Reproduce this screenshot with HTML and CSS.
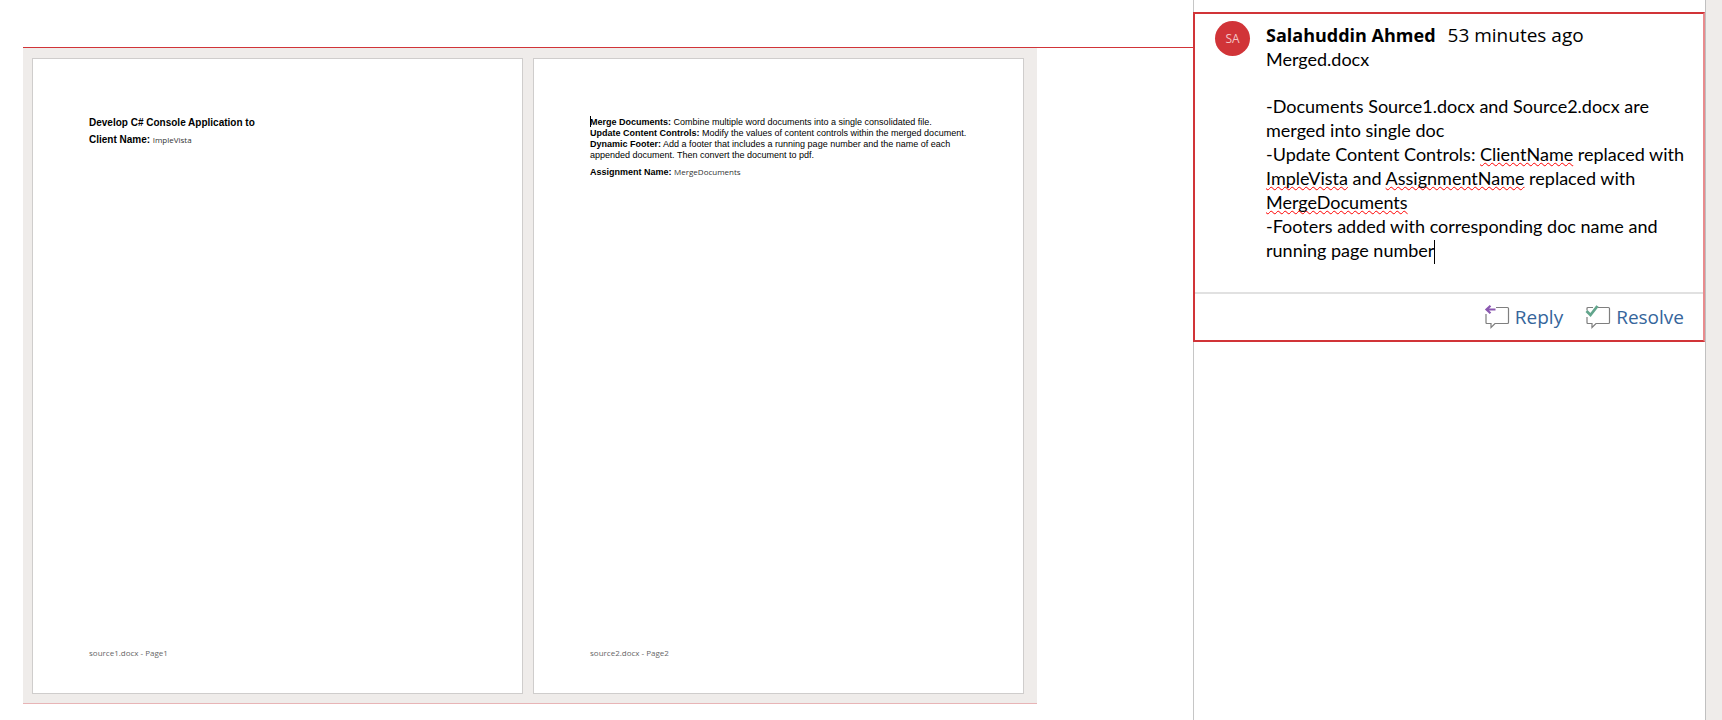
FILE: index.html
```html
<!DOCTYPE html>
<html lang="en">
<head>
<meta charset="utf-8">
<title>Merged.docx</title>
<link rel="stylesheet" href="styles.css">
</head>
<body>
<main class="workspace">
  <div class="anchor">
    <div class="canvas">
      <article class="page">
        <div class="page-body">
          <p class="title"><strong>Develop C# Console Application to</strong></p>
          <p class="field"><strong class="title">Client Name:</strong> <span class="control">ImpleVista</span></p>
        </div>
        <footer class="page-footer">source1.docx - Page1</footer>
      </article>
      <article class="page">
        <div class="page-body">
          <p class="active"><strong>Merge Documents:</strong> Combine multiple word documents into a single consolidated file.</p>
          <p><strong>Update Content Controls:</strong> Modify the values of content controls within the merged document.</p>
          <p><strong>Dynamic Footer:</strong> Add a footer that includes a running page number and the name of each appended document. Then convert the document to pdf.</p>
          <p class="field"><strong>Assignment Name:</strong> <span class="control">MergeDocuments</span></p>
        </div>
        <footer class="page-footer">source2.docx - Page2</footer>
      </article>
    </div>
  </div>
</main>
<aside class="comments">
  <section class="card">
    <div class="comment">
      <span class="avatar">SA</span>
      <div class="content">
        <header class="byline"><strong class="author">Salahuddin Ahmed</strong><span class="time">53 minutes ago</span></header>
        <div class="text">
          <p>Merged.docx</p>
          <p class="gap">-Documents Source1.docx and Source2.docx are merged into single doc</p>
          <p>-Update Content Controls: <span class="typo">ClientName</span> replaced with <span class="typo">ImpleVista</span> and <span class="typo">AssignmentName</span> replaced with <span class="typo">MergeDocuments</span></p>
          <p>-Footers added with corresponding doc name and running page number<span class="caret"></span></p>
        </div>
      </div>
    </div>
    <div class="actions">
      <button class="action" type="button">
        <svg class="icon" width="26" height="24" viewBox="0 0 26 24" fill="none"><path d="M12 2.500H23.500Q24.500 2.500 24.500 3.500V17.500Q24.500 18.500 23.500 18.500H11L7 22.500V18.500H3Q2 18.500 2 17.500V9" stroke="#7f7f7f" stroke-width="1.200"/><path d="M11.500 4.500H3M6.500 .8L2.500 4.500L6.500 8.200" stroke="#8a57b0" stroke-width="2.200"/></svg>
        Reply
      </button>
      <button class="action" type="button">
        <svg class="icon" width="26" height="24" viewBox="0 0 26 24" fill="none"><path d="M13 2.500H23.500Q24.500 2.500 24.500 3.500V17.500Q24.500 18.500 23.500 18.500H11L7 22.500V18.500H3Q2 18.500 2 17.500V12M2 5.500V3.500Q2 2.500 3 2.500H8" stroke="#7f7f7f" stroke-width="1.200"/><path d="M1.500 6L5.500 10L12.500 1" stroke="#62a58c" stroke-width="2.800"/></svg>
        Resolve
      </button>
    </div>
  </section>
</aside>
</body>
</html>
```
FILE: styles.css
```css
* { box-sizing: border-box; }

body {
  margin: 0;
  min-height: 100vh;
  display: flex;
  background: #fff;
  color: #000;
}

p { margin: 0; }

.workspace {
  flex: 1;
  display: flex;
  padding: 47px 0 16px 23px;
}

.anchor {
  flex: 1;
  display: flex;
  padding-right: 156px;
  border-top: 1px solid #d13438;
}

.canvas {
  flex: 1;
  display: flex;
  gap: 10px;
  padding: 10px 13px 9px 9px;
  background: #efecea;
  border-bottom: 1px solid #e8b4b6;
}

.page {
  flex: 1 1 0;
  display: flex;
  flex-direction: column;
  justify-content: space-between;
  padding: 58px 56px 34px 56px;
  background: #fff;
  border: 1px solid #cfcdcc;
  font-family: "Liberation Sans", Arial, sans-serif;
  font-size: 9px;
  line-height: 11px;
}

.title { font-size: 10px; }

.field { margin-top: 6px; }

.control {
  font-family: "Open Sans", sans-serif;
  font-size: 8px;
  line-height: 10px;
  color: #333;
}

.page-footer {
  font-family: "Open Sans", sans-serif;
  font-size: 8px;
  line-height: 12px;
  color: #666;
}

.active { position: relative; }

.active::before {
  content: "";
  position: absolute;
  top: -1px;
  left: 0;
  width: 1px;
  height: 11px;
  background: #000;
}

.comments {
  flex: 0 0 529px;
  padding: 12px 0;
  border-left: 1px solid #c6c6c6;
  border-right: 16px solid #efecea;
  box-shadow: inset -1px 0 #c0c0c0;
}

.card {
  margin: 0 1px 0 -1px;
  border: 2px solid #d13438;
  border-right-color: #e88b8e;
  background: #fff;
}

.comment {
  display: flex;
  gap: 16px;
  padding: 7px 18px 30px 20px;
}

.avatar {
  flex: none;
  width: 35px;
  height: 35px;
  border-radius: 50%;
  background: #d13438;
  color: #f3c5c6;
  font: 12px/35px "Open Sans", sans-serif;
  text-align: center;
}

.content { flex: 1; }

.byline {
  display: flex;
  align-items: baseline;
  gap: 12px;
  padding-top: 2px;
  font: 19px/24px "Open Sans", sans-serif;
}

.author { font-size: 18px; }

.text {
  font-family: Lato, sans-serif;
  font-size: 18px;
  line-height: 24px;
}

.gap { margin-top: 23px; }

.typo {
  text-decoration: underline wavy #f00 1px;
  text-underline-offset: 1px;
  text-decoration-skip-ink: none;
}

.caret {
  display: inline-block;
  width: 1px;
  height: 24px;
  margin: -2px 0;
  vertical-align: middle;
  background: #000;
}

.actions {
  display: flex;
  justify-content: flex-end;
  gap: 22px;
  padding: 9px 19px;
  border-top: 2px solid #e1e1e1;
}

.action {
  display: flex;
  align-items: center;
  gap: 5px;
  padding: 0;
  border: 0;
  background: none;
  color: #35659b;
  font: 19px/28px "Open Sans", sans-serif;
}
```
